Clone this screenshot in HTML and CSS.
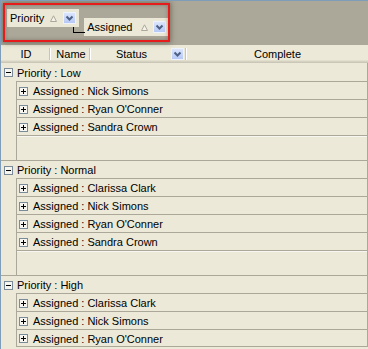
FILE: index.html
```html
<!DOCTYPE html>
<html lang="en">
<head>
    <meta charset="UTF-8" />
    <title>Grouped Grid</title>
    <link rel="stylesheet" href="styles.css">
</head>
<body>
<div class="grid">

    <!-- group-by area -->
    <div class="group-panel">
        <div class="chip">
            <span class="chip-label">Priority</span>
            <svg class="sort-icon" width="7" height="7" viewBox="0 0 7 7"><path d="M3.5 0.8 L6.5 6.5 L0.5 6.5 Z" fill="#f4f2ea" stroke="#aca899"/></svg>
            <span class="drop-btn"><svg width="11" height="10" viewBox="0 0 11 10"><path d="M2.5 3.5 L5.5 6.5 L8.5 3.5" fill="none" stroke="#4d6185" stroke-width="2"/></svg></span>
        </div>
        <div class="chip chip-child">
            <span class="chip-label">Assigned</span>
            <svg class="sort-icon" width="7" height="7" viewBox="0 0 7 7"><path d="M3.5 0.8 L6.5 6.5 L0.5 6.5 Z" fill="#f4f2ea" stroke="#aca899"/></svg>
            <span class="drop-btn"><svg width="11" height="10" viewBox="0 0 11 10"><path d="M2.5 3.5 L5.5 6.5 L8.5 3.5" fill="none" stroke="#4d6185" stroke-width="2"/></svg></span>
        </div>
        <div class="callout"></div>
    </div>

    <!-- column headers -->
    <div class="col-header">
        <div class="col col-id">ID</div>
        <div class="col col-name">Name</div>
        <div class="col col-status">
            <span class="col-text">Status</span>
            <span class="drop-btn"><svg width="11" height="10" viewBox="0 0 11 10"><path d="M2.5 3.5 L5.5 6.5 L8.5 3.5" fill="none" stroke="#4d6185" stroke-width="2"/></svg></span>
        </div>
        <div class="col col-complete">Complete</div>
    </div>

    <div class="groups">

        <div class="group">
            <div class="group-row">
                <svg class="toggle" width="9" height="9" viewBox="0 0 9 9"><rect x="0.5" y="0.5" width="8" height="8" fill="#f6f5f0" stroke="#7a8a99"/><path d="M2 4.5h5" stroke="#000"/></svg>
                Priority : Low
            </div>
            <div class="children">
                <div class="child-row"><svg class="toggle" width="9" height="9" viewBox="0 0 9 9"><rect x="0.5" y="0.5" width="8" height="8" fill="#f6f5f0" stroke="#7a8a99"/><path d="M2 4.5h5M4.5 2v5" stroke="#000"/></svg>Assigned : Nick Simons</div>
                <div class="child-row"><svg class="toggle" width="9" height="9" viewBox="0 0 9 9"><rect x="0.5" y="0.5" width="8" height="8" fill="#f6f5f0" stroke="#7a8a99"/><path d="M2 4.5h5M4.5 2v5" stroke="#000"/></svg>Assigned : Ryan O'Conner</div>
                <div class="child-row"><svg class="toggle" width="9" height="9" viewBox="0 0 9 9"><rect x="0.5" y="0.5" width="8" height="8" fill="#f6f5f0" stroke="#7a8a99"/><path d="M2 4.5h5M4.5 2v5" stroke="#000"/></svg>Assigned : Sandra Crown</div>
                <div class="group-footer"></div>
            </div>
        </div>

        <div class="group">
            <div class="group-row">
                <svg class="toggle" width="9" height="9" viewBox="0 0 9 9"><rect x="0.5" y="0.5" width="8" height="8" fill="#f6f5f0" stroke="#7a8a99"/><path d="M2 4.5h5" stroke="#000"/></svg>
                Priority : Normal
            </div>
            <div class="children">
                <div class="child-row"><svg class="toggle" width="9" height="9" viewBox="0 0 9 9"><rect x="0.5" y="0.5" width="8" height="8" fill="#f6f5f0" stroke="#7a8a99"/><path d="M2 4.5h5M4.5 2v5" stroke="#000"/></svg>Assigned : Clarissa Clark</div>
                <div class="child-row"><svg class="toggle" width="9" height="9" viewBox="0 0 9 9"><rect x="0.5" y="0.5" width="8" height="8" fill="#f6f5f0" stroke="#7a8a99"/><path d="M2 4.5h5M4.5 2v5" stroke="#000"/></svg>Assigned : Nick Simons</div>
                <div class="child-row"><svg class="toggle" width="9" height="9" viewBox="0 0 9 9"><rect x="0.5" y="0.5" width="8" height="8" fill="#f6f5f0" stroke="#7a8a99"/><path d="M2 4.5h5M4.5 2v5" stroke="#000"/></svg>Assigned : Ryan O'Conner</div>
                <div class="child-row"><svg class="toggle" width="9" height="9" viewBox="0 0 9 9"><rect x="0.5" y="0.5" width="8" height="8" fill="#f6f5f0" stroke="#7a8a99"/><path d="M2 4.5h5M4.5 2v5" stroke="#000"/></svg>Assigned : Sandra Crown</div>
                <div class="group-footer"></div>
            </div>
        </div>

        <div class="group">
            <div class="group-row">
                <svg class="toggle" width="9" height="9" viewBox="0 0 9 9"><rect x="0.5" y="0.5" width="8" height="8" fill="#f6f5f0" stroke="#7a8a99"/><path d="M2 4.5h5" stroke="#000"/></svg>
                Priority : High
            </div>
            <div class="children">
                <div class="child-row"><svg class="toggle" width="9" height="9" viewBox="0 0 9 9"><rect x="0.5" y="0.5" width="8" height="8" fill="#f6f5f0" stroke="#7a8a99"/><path d="M2 4.5h5M4.5 2v5" stroke="#000"/></svg>Assigned : Clarissa Clark</div>
                <div class="child-row"><svg class="toggle" width="9" height="9" viewBox="0 0 9 9"><rect x="0.5" y="0.5" width="8" height="8" fill="#f6f5f0" stroke="#7a8a99"/><path d="M2 4.5h5M4.5 2v5" stroke="#000"/></svg>Assigned : Nick Simons</div>
                <div class="child-row"><svg class="toggle" width="9" height="9" viewBox="0 0 9 9"><rect x="0.5" y="0.5" width="8" height="8" fill="#f6f5f0" stroke="#7a8a99"/><path d="M2 4.5h5M4.5 2v5" stroke="#000"/></svg>Assigned : Ryan O'Conner</div>
            </div>
        </div>

    </div>
</div>
</body>
</html>
```

FILE: styles.css
```css
* {
    box-sizing: border-box;
}

body {
    margin: 0;
    font-family: "Liberation Sans", Arial, sans-serif;
    font-size: 11px;
    color: #000;
    background-color: #ece9d8;
}

.grid {
    height: 349px;
    overflow: hidden;
    background-color: #ece9d8;
    border-top: 1px solid #7f9db9;
    border-left: 1px solid #7f9db9;
}

/* group-by panel */
.group-panel {
    position: relative;
    display: flex;
    align-items: flex-start;
    height: 44px;
    padding: 8px 0 0 6px;
    background-color: #aca899;
}

.chip {
    display: flex;
    align-items: center;
    height: 18px;
    padding: 0 3px 0 3px;
    background-color: #ebe8d8;
}

.chip-child {
    position: relative;
    margin-top: 9px;
    margin-left: 5px;
}

/* little elbow line between the two group chips */
.chip-child::before {
    content: "";
    position: absolute;
    left: -11px;
    top: 9px;
    width: 11px;
    height: 5px;
    border-left: 1px solid #000;
    border-bottom: 1px solid #000;
}

.sort-icon {
    margin-left: 6px;
}

.drop-btn {
    display: flex;
    align-items: center;
    justify-content: center;
    width: 13px;
    height: 12px;
    margin-left: 6px;
    background: linear-gradient(#dbe5fd, #b6c8f6);
    border: 1px solid #eef2fd;
}

.chip-child .sort-icon {
    margin-left: 8px;
}

.chip-child .drop-btn {
    margin-left: 5px;
}

.callout {
    position: absolute;
    left: 2px;
    top: 2px;
    width: 167px;
    height: 39px;
    border: 2px solid #e61c1c;
    box-shadow: 0 0 5px 1px rgba(60, 55, 40, 0.5), inset 0 0 4px rgba(60, 55, 40, 0.4);
}

/* column headers */
.col-header {
    display: flex;
    height: 18px;
    background-color: #ece9d8;
    box-shadow: inset 0 -1px #cbc7b8, inset 0 -2px #d6d2c2, inset 0 -3px #e2decd;
}

.col {
    display: flex;
    align-items: center;
    justify-content: center;
    padding-bottom: 1px;
    background: linear-gradient(to right, #c9c5b5 0 1px, #fff 1px 2px) right 3px / 2px 12px no-repeat;
}

.col-id {
    width: 50px;
}

.col-name {
    width: 40px;
}

.col-status {
    width: 96px;
    padding-left: 1px;
}

.col-status .col-text {
    flex: 1;
    text-align: center;
}

.col-status .drop-btn {
    margin: 0 3px 0 0;
}

.col-complete {
    flex: 1;
    background: none;
}

/* grouped rows */
.groups {
    border-right: 1px solid #aca899;
}

.group + .group .group-row {
    border-top: 1px solid #aca899;
}

.group-row {
    display: flex;
    align-items: center;
    height: 18px;
    padding-left: 3px;
    padding-top: 1px;
}

.group-row .toggle {
    margin-right: 4px;
}

.children {
    margin-left: 15px;
    border-left: 1px solid #aca899;
}

.child-row {
    display: flex;
    align-items: center;
    height: 18px;
    padding-left: 2px;
    padding-top: 1px;
    border-top: 1px solid #aca899;
}

.group:last-child .child-row:last-child {
    border-bottom: 1px solid #aca899;
}

.child-row .toggle {
    margin-right: 5px;
}

.group-footer {
    height: 25px;
    border-top: 1px solid #aca899;
    box-shadow: inset 0 1px #f7f6f0;
}
```
